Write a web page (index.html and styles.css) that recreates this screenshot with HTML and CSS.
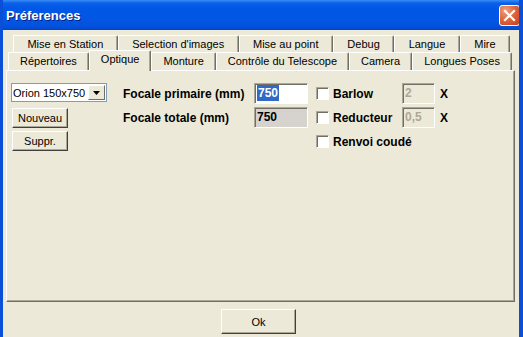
FILE: index.html
```html
<!DOCTYPE html>
<html lang="fr">
<head>
    <meta charset="UTF-8">
    <title>Préferences</title>
    <link rel="stylesheet" href="styles.css">
</head>
<body>
<div class="window">
    <div class="titlebar">
        <span class="title">Préferences</span>
        <div class="close">
            <svg width="13" height="13" viewBox="0 0 13 13"><path d="M2 2 L11 11 M11 2 L2 11" stroke="#fff" stroke-width="2.2" stroke-linecap="square"/></svg>
        </div>
    </div>

    <div class="client">
        <div class="tabs">
            <div class="tab-row row1">
                <div class="tab">Mise en Station</div>
                <div class="tab">Selection d'images</div>
                <div class="tab">Mise au point</div>
                <div class="tab">Debug</div>
                <div class="tab">Langue</div>
                <div class="tab">Mire</div>
            </div>
            <div class="tab-row row2">
                <div class="tab">Répertoires</div>
                <div class="tab active">Optique</div>
                <div class="tab">Monture</div>
                <div class="tab">Contrôle du Telescope</div>
                <div class="tab">Camera</div>
                <div class="tab">Longues Poses</div>
            </div>
        </div>

        <div class="panel">
            <div class="left-col">
                <div class="combo">
                    <span class="combo-text">Orion 150x750</span>
                    <span class="combo-btn">
                        <svg width="7" height="4" viewBox="0 0 7 4"><path d="M0 0 H7 L3.5 4 Z" fill="#000"/></svg>
                    </span>
                </div>
                <div class="btn small">Nouveau</div>
                <div class="btn small">Suppr.</div>
            </div>

            <div class="form">
                <div class="label">Focale primaire (mm)</div>
                <div class="field"><span class="sel">750</span></div>
                <div class="check"><span class="box"></span>Barlow</div>
                <div class="field disabled">2</div>
                <div class="times">X</div>

                <div class="label">Focale totale (mm)</div>
                <div class="field readonly">750</div>
                <div class="check"><span class="box"></span>Reducteur</div>
                <div class="field disabled">0,5</div>
                <div class="times">X</div>

                <div class="label"></div>
                <div></div>
                <div class="check wide"><span class="box"></span>Renvoi coudé</div>
            </div>
        </div>

        <div class="footer">
            <div class="btn ok">Ok</div>
        </div>
    </div>
</div>
</body>
</html>
```

FILE: styles.css
```css
* { box-sizing: border-box; }
html, body { margin: 0; padding: 0; background: #ece9d8; }
body { font-family: "Liberation Sans", Arial, sans-serif; font-size: 11px; color: #000; }

.window {
    width: 523px;
    height: 337px;
    background: #ece9d8;
    border-left: 3px solid #0b4fd8;
    border-right: 4px solid #0b4fd8;
    overflow: hidden;
}

.titlebar {
    height: 30px;
    margin: 0 -4px 0 -3px;
    display: flex;
    align-items: center;
    justify-content: space-between;
    padding: 0 3px 0 6px;
    background: linear-gradient(to bottom, #3c8cf5 0, #0a62ea 3px, #0058e6 8px, #0356e4 20px, #0350dc 27px, #0046c8 30px);
}
.title {
    color: #fff;
    font-weight: bold;
    font-size: 13px;
    text-shadow: 1px 1px 0 #0a1e80;
}
.close {
    width: 21px;
    height: 21px;
    border: 1px solid #fff;
    border-radius: 3px;
    background: radial-gradient(circle at 30% 25%, #f0a080 0, #e0683e 45%, #c4401a 100%);
    display: flex;
    align-items: center;
    justify-content: center;
}

.client { padding: 5px 0 0 3px; }

.tabs { margin-right: 4px; }
.tab-row { display: flex; }
.row1 { height: 17px; margin: 0 5px 0 7px; }
.row2 { height: 18px; margin: 0 3px 0 2px; }

.tab {
    flex: 1 1 auto;
    text-align: center;
    white-space: nowrap;
    padding: 2px 6px 0;
    border-top: 1px solid #fff;
    border-left: 1px solid #fff;
    border-right: 1px solid #716f64;
    border-top-right-radius: 2px;
    box-shadow: inset -1px 0 0 #aca899;
    background: #ece9d8;
}
.tab.active {
    margin-top: -2px;
    height: 21px;
    padding-top: 2px;
    margin-bottom: -1px;
    z-index: 1;
    position: relative;
}

.panel {
    height: 232px;
    margin-right: 4px;
    border-top: 1px solid #fff;
    border-left: 1px solid #fff;
    border-right: 1px solid #716f64;
    border-bottom: 1px solid #716f64;
    box-shadow: inset -1px -1px 0 #aca899;
    padding: 12px 0 0 4px;
    display: flex;
    align-items: flex-start;
}

.left-col { width: 96px; display: flex; flex-direction: column; }
.combo {
    height: 19px;
    background: #fff;
    border: 1px solid #7f9db9;
    display: flex;
    align-items: center;
    justify-content: space-between;
    padding: 0 1px 0 1px;
    margin-bottom: 6px;
}
.combo-btn {
    width: 17px;
    height: 15px;
    background: #ece9d8;
    border-top: 1px solid #fff;
    border-left: 1px solid #fff;
    border-right: 1px solid #716f64;
    border-bottom: 1px solid #716f64;
    display: flex;
    align-items: center;
    justify-content: center;
}

.btn {
    display: flex;
    align-items: center;
    justify-content: center;
    background: #ece9d8;
    border-top: 1px solid #fff;
    border-left: 1px solid #fff;
    border-right: 1px solid #404040;
    border-bottom: 1px solid #404040;
    box-shadow: inset -1px -1px 0 #aca899;
}
.btn.small { width: 56px; height: 20px; margin: 0 0 3px 1px; }

.form {
    margin-left: 16px;
    display: grid;
    grid-template-columns: 131px 54px 94px 33px auto;
    grid-template-rows: 21px 21px 21px;
    row-gap: 3px;
    align-items: center;
    font-size: 12px;
}
.label { font-weight: bold; }
.field {
    height: 21px;
    background: #fff;
    border-top: 1px solid #aca899;
    border-left: 1px solid #aca899;
    border-right: 1px solid #fff;
    border-bottom: 1px solid #fff;
    box-shadow: inset 1px 1px 0 #716f64;
    padding: 2px 0 0 2px;
    font-weight: bold;
}
.field.readonly { background: #d6d3ce; }
.field.disabled { background: #ece9d8; color: #aca899; }
.sel { background: #316ac5; color: #fff; padding: 1px 1px; }

.check {
    display: flex;
    align-items: center;
    padding-left: 8px;
    font-weight: bold;
}
.check.wide { grid-column: span 3; }
.box {
    width: 13px;
    height: 13px;
    margin-right: 4px;
    background: #fff;
    border-top: 1px solid #aca899;
    border-left: 1px solid #aca899;
    border-right: 1px solid #fff;
    border-bottom: 1px solid #fff;
    box-shadow: inset 1px 1px 0 #716f64;
}
.times { font-weight: bold; font-size: 12px; padding-left: 5px; }

.footer { padding: 7px 0 0 215px; }
.btn.ok { width: 75px; height: 25px; }
```
